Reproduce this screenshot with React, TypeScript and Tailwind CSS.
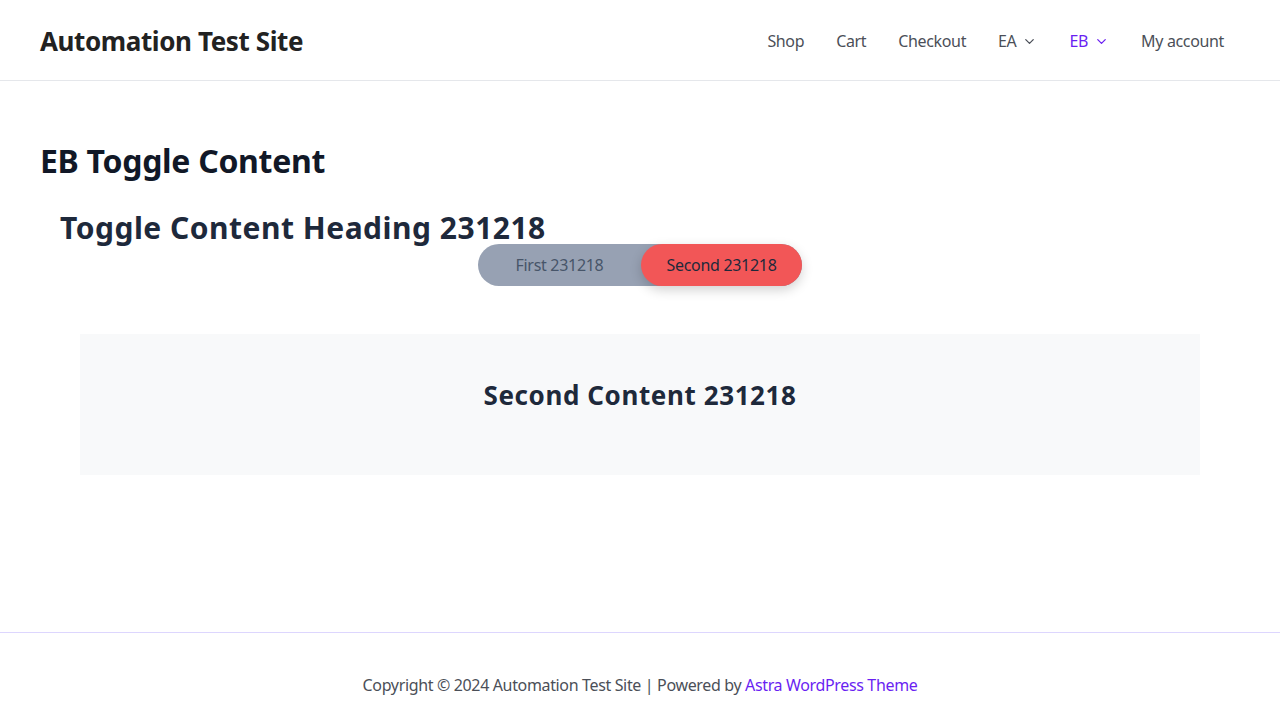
import { ChevronDown } from "lucide-react";

const NAV = [
  { label: "Shop" },
  { label: "Cart" },
  { label: "Checkout" },
  { label: "EA", sub: true },
  { label: "EB", sub: true, active: true },
  { label: "My account" },
];

const font = { fontFamily: '"Noto Sans", "Open Sans", sans-serif' };

const App = () => {
  return (
    <div className="min-h-[720px] flex flex-col bg-white" style={font}>
      <header className="h-[81px] border-b border-[#e5e7eb] px-10 flex items-center justify-between">
        <p className="text-[26px] font-bold text-[#222222] tracking-[-0.4px] pt-[2px]">
          Automation Test Site
        </p>
        <nav className="flex items-center pt-[2px]">
          {NAV.map((n) => (
            <a
              key={n.label}
              className={`flex items-center px-4 text-[16px] tracking-[-0.35px] ${
                n.active ? "text-[#6a1ff2]" : "text-[#4b4f58]"
              }`}
            >
              {n.label}
              {n.sub && <ChevronDown size={15} strokeWidth={2} className="ml-[6px]" />}
            </a>
          ))}
        </nav>
      </header>

      <main className="flex-1 px-10 pt-[60px]">
        <h1 className="text-[32px] font-bold text-[#111827] leading-[40px] tracking-[-0.3px]">
          EB Toggle Content
        </h1>
        <div className="px-5 pt-[30px]">
          <h2 className="text-[30px] font-bold text-[#1e293b] tracking-[0.5px] leading-[33px]">
            Toggle Content Heading 231218
          </h2>
          <div className="flex justify-center -mx-5">
            <div className="flex h-[42px] w-[324px] rounded-full bg-[#97a1b3]">
              <div className="flex-1 flex items-center justify-center text-[16px] text-[#475569] tracking-[-0.3px]">
                First 231218
              </div>
              <div className="w-[161px] flex items-center justify-center rounded-full bg-[#f25657] text-[16px] text-[#1e293b] tracking-[-0.3px] shadow-[0_4px_12px_rgba(0,0,0,0.18)]">
                Second 231218
              </div>
            </div>
          </div>
          <div className="mx-5 mt-[48px] h-[141px] bg-[#f8f9fa] flex justify-center pt-[44px]">
            <h3 className="text-[26px] font-bold text-[#1e293b] tracking-[0.6px] leading-[34px]">
              Second Content 231218
            </h3>
          </div>
        </div>
      </main>

      <footer className="h-[88px] border-t border-[#ddd6fe] flex justify-center pt-[40px] text-[16px] leading-[24px] text-[#4b4f58] tracking-[-0.35px]">
        <p>
          Copyright © 2024 Automation Test Site | Powered by{" "}
          <a className="text-[#6a1ff2]">Astra WordPress Theme</a>
        </p>
      </footer>
    </div>
  );
};

export default App;
